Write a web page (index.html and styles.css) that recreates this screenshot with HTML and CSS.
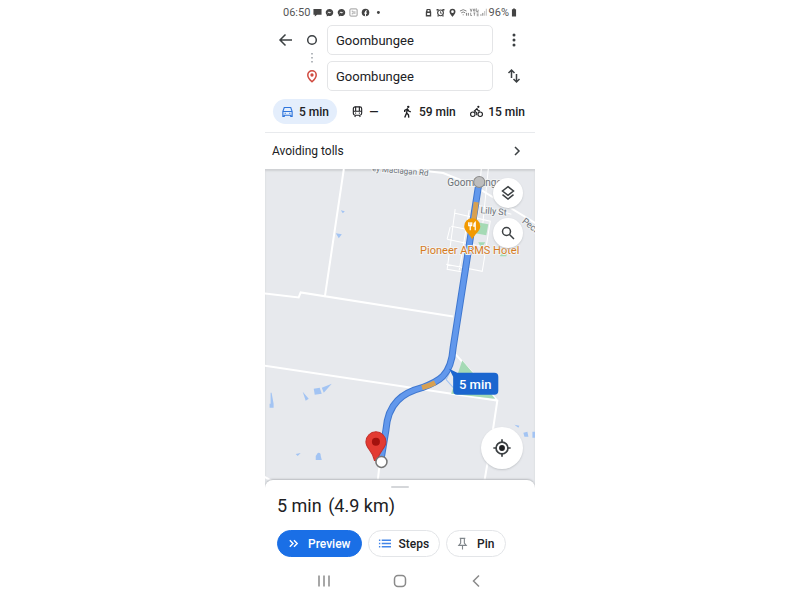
FILE: index.html
```html
<!DOCTYPE html>
<html lang="en">
<head>
<meta charset="UTF-8" />
<meta name="viewport" content="width=device-width, initial-scale=1" />
<title>Directions to Goombungee</title>
<link rel="stylesheet" href="styles.css">
</head>
<body>
  <div class="phone">

    <!-- Status bar -->
    <div class="status">
      <span class="status-text">06:50</span>
      <svg class="status-icon" viewBox="0 0 10 10"><path d="M0.500 1h9v6.500H4.500L2 9.500v-2H.5z" /></svg>
      <svg class="status-icon" viewBox="0 0 10 10"><path fill-rule="evenodd" d="M5 1a4 4 0 0 0-3 6.800V9.500l1.600-.8A4 4 0 1 0 5 1zM2.200 6.200 4.400 3.900l1.200 1 2-1-2.100 2.300-1.200-1z" /></svg>
      <svg class="status-icon" viewBox="0 0 10 10"><path fill-rule="evenodd" d="M5 1a4 4 0 0 0-3 6.800V9.500l1.600-.8A4 4 0 1 0 5 1zM2.200 6.200 4.400 3.900l1.200 1 2-1-2.100 2.300-1.200-1z" /></svg>
      <svg class="status-icon" viewBox="0 0 10 10"><rect x="1" y="1" width="8" height="8" rx="1" fill="none" stroke="#777" stroke-width=".8" /><path d="M3 3.500h1.600v3H3M6.500 3.500v3.200" fill="none" stroke="#888" stroke-width=".8" /></svg>
      <svg class="status-icon" viewBox="0 0 10 10"><circle cx="5" cy="5" r="4.200" /><path d="M5 9.500V4.600q0-1.600 1.700-1.500M3.600 5.700h3" fill="none" stroke="#fff" stroke-width="1.200" /></svg>
      <svg class="status-icon" viewBox="0 0 10 10"><circle cx="6" cy="5" r="1.600" /></svg>
      <span class="spacer"></span>
      <svg class="status-icon" viewBox="0 0 10 10"><path fill-rule="evenodd" d="M2 4.500 3 1h4l1 3.500v5H2zM4 2.200v1.600h2V2.200zM3.500 5.500v2.400h3V5.500z" /></svg>
      <svg class="status-icon" viewBox="0 0 10 10"><circle cx="5" cy="5.400" r="3.200" fill="none" stroke="#444" stroke-width="1.300" /><path d="M.5 1.200h3L1 3.700zM9.500 1.200h-3L9 3.700zM4.600 3.700h.9v1.600h1.200v.8H4.600zM1.600 8h1.500v1.500H1.600zM7 8h1.500v1.500H7z" /></svg>
      <svg class="status-icon" viewBox="0 0 10 10"><path fill-rule="evenodd" d="M5 .8a3.300 3.300 0 0 0-3.300 3.300C1.700 6.500 5 9.700 5 9.700s3.300-3.200 3.300-5.600A3.300 3.300 0 0 0 5 .8zM5 2.600a1.500 1.500 0 1 1 0 3 1.500 1.500 0 0 1 0-3z" /></svg>
      <svg class="status-signal" viewBox="0 0 30 10"><g fill="none" stroke="#777"><path d="M1 4q3.500-3 7 0M2.400 5.900q2.100-1.800 4.200 0" /><path d="M4.500 8.500v-1M8 6v3M10 9V6" /><path d="M12 1.500l1 3 1-3M15.500 2h1.500v2h-1.500zM18.500 1v3.500h2V2.500M12.500 5.800v3H14M15.500 6h2M16.500 6v3M19 6h2M19 7.500h2M19 9h2" stroke-width=".8" /><path d="M23.500 9V7.500M25.500 9V6" /><path d="M27.500 9V4M29.300 9V1.500" stroke="#bbb" /></g></svg>
      <span class="status-text">96%</span>
      <svg class="status-battery" viewBox="0 0 6 10"><path d="M2 .5h2v1h1.300v8H.7v-8H2z" /></svg>
    </div>

    <!-- Start and destination -->
    <form class="route-form">
      <button type="button" class="icon-button" aria-label="Back">
        <svg class="icon" viewBox="0 0 16 16"><path d="M14 8H2.500M7.500 2.500 2 8l5.500 5.500" /></svg>
      </button>
      <svg class="icon" viewBox="0 0 16 16"><circle cx="8" cy="8" r="4.300" /></svg>
      <input class="place" type="text" value="Goombungee" aria-label="Starting point" />
      <button type="button" class="icon-button" aria-label="More options">
        <svg class="icon icon-solid" viewBox="0 0 16 16"><circle cx="8" cy="3" r="1.500" /><circle cx="8" cy="8" r="1.500" /><circle cx="8" cy="13" r="1.500" /></svg>
      </button>
      <svg class="route-dots" viewBox="0 0 4 12"><path d="M2 1v11" /></svg>
      <svg class="icon icon-red" viewBox="0 0 16 16"><path d="M8 2.800a4.200 4.200 0 0 0-4.200 4.200C3.800 10 8 13.800 8 13.800S12.200 10 12.200 7A4.200 4.200 0 0 0 8 2.800z" /><circle cx="8" cy="7" r=".9" /></svg>
      <input class="place" type="text" value="Goombungee" aria-label="Destination" />
      <button type="button" class="icon-button" aria-label="Swap start and destination">
        <svg class="icon" viewBox="0 0 16 16"><path d="M5.500 10V2M2.500 5l3-3 3 3M10.500 6v8M7.500 11l3 3 3-3" /></svg>
      </button>
    </form>

    <!-- Travel modes -->
    <div class="modes">
      <button type="button" class="mode mode-active">
        <svg class="mode-icon" viewBox="0 0 14 14"><path d="M2 7 3.500 2.700h7L12 7v5.200h-1.500V11h-7v1.200H2zM2 7h10" /><path d="M4 9h1M9 9h1" /></svg>
        5 min
      </button>
      <button type="button" class="mode mode-empty" aria-label="Transit">
        <svg class="mode-icon" viewBox="0 0 14 14"><rect x="2.500" y="2" width="9" height="9" rx="2" /><path d="M2.500 6.800h9M5 2v4.500M9 2v4.500M4 12.800l1-1.500M10 12.800l-1-1.500M4.500 8.800h1M8.500 8.800h1" /></svg>
        —
      </button>
      <button type="button" class="mode">
        <svg class="mode-icon" viewBox="0 0 14 14"><circle cx="7.800" cy="2" r="1.300" fill="currentColor" stroke="none" /><path d="M4 7.500V5.800L7 4.200 8.300 6.500 10.500 7.500M7 4.500 6 8.500l2 2 .4 3M6 8.500 5 11l-1 2.500" stroke-width="1.500" /></svg>
        59 min
      </button>
      <button type="button" class="mode">
        <svg class="mode-icon" viewBox="0 0 14 14"><circle cx="3" cy="10" r="2.400" /><circle cx="11" cy="10" r="2.400" /><circle cx="9" cy="2" r="1.200" fill="currentColor" stroke="none" /><path d="M10.800 6.300H9L7.500 4 4.700 6.500l2.500 1.800V11" /></svg>
        15 min
      </button>
    </div>

    <button type="button" class="avoid">
      Avoiding tolls
      <svg class="chevron" viewBox="0 0 12 12"><path d="M4 2l4 4-4 4" /></svg>
    </button>

    <!-- Map -->
    <div class="map">
      <svg class="map-canvas" viewBox="0 0 270 318" preserveAspectRatio="xMidYMid slice" role="img" aria-label="Route map">
        <g class="road">
          <path d="M79 0 60 128M0 124l34 4 2-5 152 24M125-2l53 6 30 12 62 38M188 182l44 49M0 196l233 35M232 231l-6 40-8 47M115 291l-3 27M0 307l20 11" />
          <path class="road-minor" d="M216 0l-4 50M223 0l-6 60M212 36l34 9M190 40l-8 60 17 3M190 44l35 8-8 50-36-7M185 58l-3 12M182 70l38 8M186 57l35 7M204 41l-10 60" />
          <path class="creek" d="M184 204l-3 6 8 9" />
        </g>
        <g class="water">
          <path d="M76 41l4 1-2 2zM71 64l6 1-3 4zM6 223l1 0 2 11H6zM5 234h4v4H5zM38 222l6 7-3 2zM49 219l6-1 2 6-7 1zM57 218l10-4-8 9zM31 284l5-1-3 3zM51 286l2-3q3-1 3 3l1 4h-6zM249 255l5 1-1 2zM258 263l4-1 1 5h-4zM267 262h3v6h-3z" />
        </g>
        <g class="park">
          <path d="M212 53l11 2-2 11-11-2zM213 73h7l-4 6zM234 82h8l-1 5h-6zM197 191l33 38-44-5z" />
        </g>

        <path class="route-edge" d="M214 12 188 178C186 207 173 212 157 218 138 223 123 233 121 260L116 290" />
        <path class="route-line" d="M214 12 188 178C186 207 173 212 157 218 138 223 123 233 121 260L116 290" />
        <path class="route-slow" d="M211 33 207 62M157 218q7-2 13-5" />

        <text class="map-label small" x="107" y="2" transform="rotate(5 107 2)">ey Maclagan Rd</text>
        <text class="map-label town" x="182" y="17">Goombungee</text>
        <text class="map-label" x="215" y="44" transform="rotate(5 215 44)">Lilly St</text>
        <text class="map-label" x="256" y="53" transform="rotate(38 256 53)">Peck St</text>
        <text class="map-label poi" x="155" y="85">Pioneer ARMS Hotel</text>

        <path class="poi-pin" d="M207 49a8 8 0 0 1 8 8c0 5-5 7-8 13-3-6-8-8-8-13a8 8 0 0 1 8-8z" />
        <path class="poi-fork" d="M203.500 53v3.500h3V53M205 53v8M210 61v-8q-1.500 1-1.500 4H210" />
        <circle class="route-start" cx="214" cy="13" r="5.500" />
        <path class="pin" d="M111 262a10 10 0 0 1 10 10c0 7-7 9-8.500 18.500h-3C108 281 101 279 101 272a10 10 0 0 1 10-10z" />
        <circle class="pin-core" cx="111" cy="272" r="4" />
        <circle class="route-end" cx="116.500" cy="292" r="5.500" />

        <path class="eta" d="M184 199l8 4h37q4 0 4 4v14q0 4-4 4h-37q-4 0-4-4v-14z" />
        <text class="eta-text" x="210" y="219">5 min</text>
      </svg>
      <div class="map-tools">
        <button type="button" class="round" aria-label="Layers">
          <svg class="icon" viewBox="0 0 16 16"><path d="M8 1.700 13.500 6 8 10.300 2.500 6zM2.500 9.700 8 14l5.500-4.300" /></svg>
        </button>
        <button type="button" class="round" aria-label="Search along route">
          <svg class="icon" viewBox="0 0 16 16"><circle cx="6.500" cy="6.500" r="4" /><path d="M9.500 9.500l4.500 4.500" /></svg>
        </button>
      </div>
      <button type="button" class="round locate" aria-label="My location">
        <svg class="icon" viewBox="0 0 16 16"><circle cx="8" cy="8" r="5.300" /><circle cx="8" cy="8" r="2.600" fill="currentColor" stroke="none" /><path d="M8 .3v2.500M8 13.200v2.500M.3 8h2.500M13.200 8h2.500" /></svg>
      </button>
    </div>

    <!-- Trip summary -->
    <div class="sheet">
      <div class="handle"></div>
      <h1 class="summary">5 min <span>(4.9 km)</span></h1>
      <div class="actions">
        <button type="button" class="action action-primary">
          <svg class="action-icon" viewBox="0 0 14 14"><path d="M3 3.500 6.500 7 3 10.500M7.500 3.500 11 7l-3.500 3.500" /></svg>
          Preview
        </button>
        <button type="button" class="action">
          <svg class="action-icon blue" viewBox="0 0 14 14"><path d="M4 3.500h10M4 7h10M4 10.500h10M1 3.500h1.500M1 7h1.500M1 10.500h1.500" /></svg>
          Steps
        </button>
        <button type="button" class="action">
          <svg class="action-icon grey" viewBox="0 0 14 14"><path d="M4 1.500h6M5 1.500v5L3 9h8L9 6.500v-5M7 9v4.500" /></svg>
          Pin
        </button>
      </div>
      <nav class="navbar">
        <button type="button" class="icon-button" aria-label="Recent apps">
          <svg class="icon" viewBox="0 0 16 16"><path d="M3 2.500v11M8 2.500v11M13 2.500v11" /></svg>
        </button>
        <button type="button" class="icon-button" aria-label="Home">
          <svg class="icon" viewBox="0 0 16 16"><rect x="2.500" y="2.500" width="11" height="11" rx="3.500" /></svg>
        </button>
        <button type="button" class="icon-button" aria-label="Go back">
          <svg class="icon" viewBox="0 0 16 16"><path d="M11 2.500 5.500 8l5.500 5.500" /></svg>
        </button>
      </nav>
    </div>

  </div>
</body>
</html>
```
FILE: styles.css
```css
* {
    box-sizing: border-box;
}
body {
    margin: 0;
    background-color: #ffffff;
    color: #202124;
    font-family: Roboto, "Liberation Sans", sans-serif;
}
button {
    border: none;
    padding: 0;
    background: none;
    color: inherit;
    font-family: inherit;
    cursor: pointer;
}
svg {
    display: block;
    flex: none;
}
.phone {
    height: 100vh;
    aspect-ratio: 9 / 20;
    margin: 0 auto;
    display: flex;
    flex-direction: column;
    overflow: hidden;
}
/* Status bar */
.status {
    display: flex;
    align-items: center;
    height: 24px;
    padding: 0 18px;
    color: #555555;
    fill: #444444;
}
.status-text {
    font-size: 11px;
}
.status-icon {
    width: 9px;
    height: 9px;
    margin-left: 3px;
}
.status-signal {
    width: 28px;
    height: 10px;
    margin: 0 2px;
}
.status-battery {
    width: 6px;
    height: 9px;
    margin-left: 2px;
}
.spacer {
    flex: 1;
}
/* Start and destination */
.route-form {
    position: relative;
    display: grid;
    grid-template-columns: 22px 30px 1fr 42px;
    row-gap: 6px;
    align-items: center;
    justify-items: center;
    padding: 1px 0 0 10px;
}
.route-form .icon-red {
    grid-column: 2;
}
.icon-button {
    display: flex;
    justify-content: center;
}
.icon {
    width: 16px;
    height: 16px;
    fill: none;
    stroke: #3c4043;
    stroke-width: 1.5;
}
.icon-solid {
    fill: #3c4043;
    stroke: none;
}
.icon-red {
    stroke: #d04a3f;
}
.place {
    width: 100%;
    min-width: 0;
    height: 30px;
    padding: 0 8px;
    border: 1px solid #e4e5e7;
    border-radius: 5px;
    background-color: #ffffff;
    color: #202124;
    font-family: inherit;
    font-size: 13px;
}
.route-dots {
    position: absolute;
    left: 45px;
    top: 28px;
    width: 4px;
    height: 12px;
    fill: none;
    stroke: #9aa0a6;
    stroke-width: 1.5;
    stroke-dasharray: 1.5 2.5;
}
/* Travel modes */
.modes {
    display: flex;
    justify-content: space-between;
    padding: 8px 10px 8px 8px;
    border-bottom: 1px solid #e8eaed;
}
.mode {
    display: flex;
    align-items: center;
    gap: 5px;
    height: 25px;
    border-radius: 13px;
    font-size: 12px;
    font-weight: 500;
}
.mode-active {
    padding: 0 8px;
    background-color: #e4eefc;
}
.mode-empty {
    padding-right: 8px;
}
.mode-icon {
    width: 13px;
    height: 13px;
    fill: none;
    stroke: currentColor;
    stroke-width: 1.2;
}
.mode-active .mode-icon {
    stroke: #2f75dc;
}
.avoid {
    display: flex;
    align-items: center;
    justify-content: space-between;
    height: 36px;
    padding: 0 12px 0 7px;
    font-size: 12px;
}
.chevron {
    width: 12px;
    height: 12px;
    fill: none;
    stroke: #3c4043;
    stroke-width: 1.5;
}
/* Map */
.map {
    position: relative;
    flex: 1;
    min-height: 0;
    background-color: #e7e9ed;
    box-shadow: inset 0 2px 2px #cfd1d4;
}
.map-canvas {
    position: absolute;
    width: 100%;
    height: 100%;
}
.water {
    fill: #a3c4f3;
}
.park {
    fill: #a5dab5;
}
.road {
    fill: none;
    stroke: #ffffff;
    stroke-width: 2;
}
.road-minor {
    stroke-width: 1;
}
.creek {
    stroke: #a3c4f3;
    stroke-width: 1;
}
.route-edge, .route-line, .route-slow {
    fill: none;
    stroke-linejoin: round;
}
.route-edge {
    stroke: #3f77cf;
    stroke-width: 7;
}
.route-line {
    stroke: #6298ec;
    stroke-width: 5;
}
.route-slow {
    stroke: #d7a052;
    stroke-width: 5;
}
.route-start {
    fill: #bdbdbd;
    stroke: #8b8b8b;
}
.route-end {
    fill: #ffffff;
    stroke: #757575;
    stroke-width: 1.5;
}
.map-label {
    fill: #6a7077;
    stroke: #f1f3f4;
    stroke-width: 2;
    paint-order: stroke;
    font-size: 9px;
}
.map-label.small {
    font-size: 8px;
}
.map-label.town {
    font-size: 10px;
}
.map-label.poi {
    fill: #d67b1f;
    font-size: 11px;
}
.poi-pin {
    fill: #f29900;
}
.poi-fork {
    fill: none;
    stroke: #ffffff;
    stroke-width: 1.2;
}
.pin {
    fill: #e33b32;
    stroke: #c5302a;
}
.pin-core {
    fill: #a3120e;
}
.eta {
    fill: #1b66cf;
}
.eta-text {
    fill: #ffffff;
    font-size: 13px;
    font-weight: 500;
    text-anchor: middle;
}
.map-tools {
    position: absolute;
    top: 9px;
    right: 12px;
    display: flex;
    flex-direction: column;
    gap: 10px;
}
.round {
    display: flex;
    align-items: center;
    justify-content: center;
    width: 30px;
    height: 30px;
    border-radius: 50%;
    background-color: #ffffff;
    box-shadow: 0 1px 2px #c4c7cb;
}
.locate {
    position: absolute;
    right: 12px;
    bottom: 19px;
    width: 42px;
    height: 42px;
}
.locate .icon {
    width: 18px;
    height: 18px;
}
/* Trip summary */
.sheet {
    position: relative;
    margin-top: -8px;
    padding: 6px 12px 11px;
    border-radius: 8px 8px 0 0;
    background-color: #ffffff;
    box-shadow: 0 -1px 2px #b9bcc0;
}
.handle {
    width: 18px;
    height: 2px;
    margin: 0 auto;
    border-radius: 1px;
    background-color: #d5d7da;
}
.summary {
    margin: 6px 0 12px;
    font-size: 18px;
    font-weight: 400;
    line-height: 24px;
}
.summary span {
    margin-left: 2px;
}
.actions {
    display: flex;
    gap: 6px;
}
.action {
    display: flex;
    align-items: center;
    gap: 8px;
    height: 27px;
    padding: 0 10px 0 9px;
    border: 1px solid #e3e5e8;
    border-radius: 14px;
    font-size: 12px;
    font-weight: 500;
}
.action-primary {
    border-color: #1a6fe6;
    background-color: #1a6fe6;
    color: #ffffff;
}
.action-icon {
    width: 13px;
    height: 13px;
    fill: none;
    stroke: currentColor;
    stroke-width: 1.5;
}
.action-icon.blue {
    stroke: #4285e8;
}
.action-icon.grey {
    stroke: #80868b;
    stroke-width: 1.2;
}
.navbar {
    display: flex;
    justify-content: space-between;
    margin-top: 16px;
    padding: 0 39px;
}
.navbar .icon {
    stroke: #8a8a8a;
}
```
